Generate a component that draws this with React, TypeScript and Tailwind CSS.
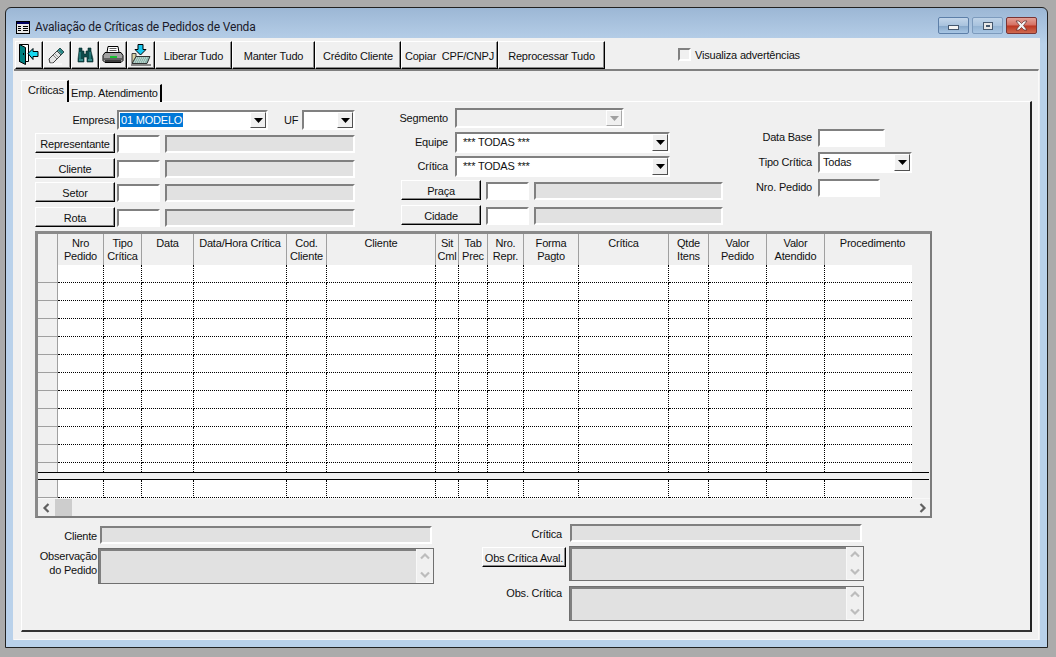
import React from "react";

const raised =
  "flex items-center justify-center border border-t-white border-l-white border-r-black border-b-black shadow-[inset_-1px_-1px_0_#8a8a8a] bg-[#f0f0f0] text-[#111]";
const sunken = "border-2 border-t-[#808080] border-l-[#808080] border-r-white border-b-white";

function Btn({ className, children }: { className: string; children: React.ReactNode }) {
  return <div className={`${raised} pt-[2px] ${className}`}>{children}</div>;
}

function IconBtn({ children }: { children: React.ReactNode }) {
  return <div className={`${raised} w-[28px] h-[28px]`}>{children}</div>;
}

function Input({ className }: { className: string }) {
  return <div className={`${sunken} bg-white mt-[2px] h-[18px] ${className}`} />;
}

function ReadOnly({ className }: { className: string }) {
  return <div className={`${sunken} bg-[#e1e1e1] h-[18px] ${className}`} />;
}

function Arrow({ disabled }: { disabled?: boolean }) {
  return (
    <svg width="9" height="5" viewBox="0 0 9 5">
      <path d="M0 0h9L4.5 5z" fill={disabled ? "#a0a0a0" : "#000"} />
    </svg>
  );
}

function Combo({
  className,
  text,
  selected,
  disabled,
  inset,
}: {
  className: string;
  text?: string;
  selected?: boolean;
  disabled?: boolean;
  inset?: boolean;
}) {
  return (
    <div className={`${sunken} flex items-stretch ${disabled ? "bg-[#f0f0f0]" : "bg-white"} ${className}`}>
      <div className={`flex-1 flex items-center min-w-0 ${inset ? "pl-[4px]" : "pl-[1px]"}`}>
        {text &&
          (selected ? (
            <span className="bg-[#0078d7] text-white px-[1px] leading-[14px]">{text}</span>
          ) : (
            <span className="px-[2px] text-[#111]">{text}</span>
          ))}
      </div>
      <div
        className={`w-[16px] flex items-center justify-center bg-[#f0f0f0] border border-t-white border-l-white ${
          disabled ? "border-r-[#a8a8a8] border-b-[#a8a8a8]" : "border-r-[#505050] border-b-[#505050]"
        }`}
      >
        <Arrow disabled={disabled} />
      </div>
    </div>
  );
}

function Chevron({ dir, color, size = 10 }: { dir: "l" | "r" | "u" | "d"; color: string; size?: number }) {
  const d = {
    l: "M6.5 1 2.5 5l4 4",
    r: "M3.5 1l4 4-4 4",
    u: "M1 6.5l4-4 4 4",
    d: "M1 3.5l4 4 4-4",
  }[dir];
  return (
    <svg width={size} height={size} viewBox="0 0 10 10">
      <path d={d} fill="none" stroke={color} strokeWidth="2.2" />
    </svg>
  );
}

function Memo({ className }: { className: string }) {
  return (
    <div className={`border border-[#6f6f6f] bg-[#e1e1e1] flex ${className}`}>
      <div className="flex-1 border-t-2 border-l-2 border-[#808080]" />
      <div className="w-[17px] border-l border-b border-[#f8f8f8] bg-[#f0f0f0] flex flex-col items-center justify-between py-[3px]">
        <Chevron dir="u" color="#bcbcbc" />
        <Chevron dir="d" color="#bcbcbc" />
      </div>
    </div>
  );
}

const gridCols =
  "grid grid-cols-[20px_46px_38px_52px_93px_40px_109px_23px_29px_36px_55px_90px_40px_58px_58px_87px]";

const headers: React.ReactNode[] = [
  "",
  <>Nro<br />Pedido</>,
  <>Tipo<br />Crítica</>,
  "Data",
  "Data/Hora Crítica",
  <>Cod.<br />Cliente</>,
  "Cliente",
  <>Sit<br />Cml</>,
  <>Tab<br />Prec</>,
  <>Nro.<br />Repr.</>,
  <>Forma<br />Pagto</>,
  "Crítica",
  <>Qtde<br />Itens</>,
  <>Valor<br />Pedido</>,
  <>Valor<br />Atendido</>,
  "Procedimento",
];

function DataRow({ h, line = true }: { h: string; line?: boolean }) {
  return (
    <div className={`${gridCols} ${h}`}>
      {headers.map((_, i) =>
        i === 0 ? (
          <div key={i} className={`bg-[#f0f0f0] border-r border-[#a0a0a0] ${line ? "border-b" : ""}`} />
        ) : (
          <div
            key={i}
            className={`bg-white ${i < 15 ? "border-r border-dotted border-r-black" : ""} ${
              line ? "border-b border-dotted border-b-black" : ""
            }`}
          />
        )
      )}
    </div>
  );
}

function Door() {
  return (
    <svg width="22" height="22" viewBox="0 0 22 22">
      <path d="M1.500 .5h9v17h-9z" fill="#fff" stroke="#000" />
      <path d="M1.500 .5l6 3v17l-6-3z" fill="#008080" stroke="#000" />
      <rect x="5" y="9" width="1" height="2" fill="#000" />
      <path d="M10 9.500l5-5v3h5v5h-5v3z" fill="#19d8f0" stroke="#000" />
    </svg>
  );
}

function Eraser() {
  return (
    <svg width="22" height="22" viewBox="0 0 22 22">
      <path d="M3 15 14 4l4 4L7 19H4z" fill="#e4e4e4" stroke="#404040" />
      <path d="M11 7l3-3 4 4-3 3z" fill="#2a8a8a" stroke="#305050" />
      <path d="M7 11l4 4" stroke="#808080" />
      <path d="M9 10l3 3M12 7l3 3" stroke="#9a9a9a" />
      <path d="M2 20h14" stroke="#ffffff" />
    </svg>
  );
}

function Binoculars() {
  return (
    <svg width="20" height="18" viewBox="0 0 20 18">
      <path d="M4 2h3v3h2v3h2V5h2V2h3v3l2 8v3h-6v-5H9v5H3v-3L4 5z" fill="#0d4a4a" stroke="#062b2b" strokeWidth=".6" />
      <path d="M5 6v7M15 6v7" stroke="#3aa0a0" />
      <path d="M4 14h4M13 14h4" stroke="#6cc" />
    </svg>
  );
}

function Printer() {
  return (
    <svg width="22" height="20" viewBox="0 0 22 20">
      <path d="M6 1.500h10l1 6H5z" fill="#fff" stroke="#000" />
      <path d="M7.500 3.500h7M7.500 5.500h7" stroke="#606060" />
      <path d="M3 7.500h16l2 3v5l-2 2H3l-2-2v-5z" fill="#a0a0a0" stroke="#000" />
      <path d="M2 14h18" stroke="#202020" />
      <path d="M8 11h7v2H8z" fill="#18c030" />
      <path d="M3 15h16v2H3z" fill="#3c3c3c" />
    </svg>
  );
}

function Folder() {
  return (
    <svg width="22" height="22" viewBox="0 0 22 22">
      <path d="M8 .5h5v5h3l-5.500 5.500L5 5.500h3z" fill="#19c8f0" stroke="#000" />
      <path d="M2 9.500h4v10H2z" fill="#d8d0a0" stroke="#404040" />
      <path d="M6 12.500h14l-3 7H2z" fill="#8fb8b0" stroke="#303030" />
      <path d="M6 14h11M5 16h11M4 18h11" stroke="#e0e8e0" strokeDasharray="1 1" />
      <path d="M1 21h20" stroke="#202020" />
    </svg>
  );
}

function CaptionButtons() {
  return (
    <div className="flex gap-[3px] mr-[3px] mt-[9px]">
      <div className="w-[31px] h-[17px] rounded-[2px] border border-[#5d7fa8] bg-[linear-gradient(to_bottom,#c3d6ea_0%,#a9c3de_50%,#86a7c9_52%,#a8c6e4_100%)] flex items-center justify-center">
        <div className="w-[11px] h-[5px] mt-[3px] bg-[#f4f4f4] border border-[#45586f]" />
      </div>
      <div className="w-[31px] h-[17px] rounded-[2px] border border-[#7d9bbd] bg-[linear-gradient(to_bottom,#bfd3e8_0%,#a9c3de_50%,#93b2d2_52%,#a8c6e4_100%)] flex items-center justify-center">
        <div className="w-[10px] h-[8px] bg-[#e8e8e8] border border-[#45586f] flex items-center justify-center">
          <div className="w-[4px] h-[2px] bg-[#45586f]" />
        </div>
      </div>
      <div className="w-[31px] h-[17px] rounded-[2px] border border-[#7a3434] bg-[linear-gradient(to_bottom,#e3a197_0%,#d56f62_48%,#bb3420_52%,#cf6a50_100%)] flex items-center justify-center">
        <svg width="13" height="11" viewBox="0 0 13 11">
          <path d="M1 1h3l2.500 2.500L9 1h3L8.500 5.500 12 10H9L6.500 7.500 4 10H1l3.500-4.500z" fill="#f2f2f2" stroke="#5a2a2a" strokeWidth=".7" />
        </svg>
      </div>
    </div>
  );
}

export default function App() {
  return (
    <div className="w-[1056px] h-[657px] bg-[#ababab] overflow-hidden pt-[7px] pl-[5px] text-[11px] tracking-[-0.2px] text-[#111] font-['Liberation_Sans',Arial,sans-serif]">
      <div className="w-[1043px] h-[641px] rounded-t-[6px] border border-[#222] px-[7px] bg-[linear-gradient(to_bottom,#9cb7d5_0px,#b9d1ea_36px)]">
        {/* title bar */}
        <div className="h-[30px] flex justify-between items-start">
          <div className="flex items-center mt-[11px] ml-[3px] gap-[5px]">
            <svg width="14" height="13" viewBox="0 0 14 13">
              <rect x=".5" y=".5" width="13" height="12" fill="#e8e8e8" stroke="#000" />
              <rect x="1" y="1" width="12" height="2" fill="#000060" />
              <path d="M2 5h3v1H2zM2 7h3v1H2zM2 9h3v1H2zM7 5h5v1H7zM7 7h5v1H7zM7 9h5v1H7z" fill="#000" />
            </svg>
            <span className="text-[12px] tracking-[-0.15px] leading-[16px] text-[#1a1a2a] font-['Roboto',sans-serif]">
              Avaliação de Críticas de Pedidos de Venda
            </span>
          </div>
          <CaptionButtons />
        </div>

        {/* client */}
        <div className="w-[1027px] h-[602px] bg-[#f0f0f0]">
          {/* toolbar */}
          <div className="h-[31px] pt-[3px] pl-[2px] flex">
            <IconBtn><Door /></IconBtn>
            <IconBtn><Eraser /></IconBtn>
            <IconBtn><Binoculars /></IconBtn>
            <IconBtn><Printer /></IconBtn>
            <IconBtn><Folder /></IconBtn>
            <Btn className="w-[77px] h-[28px]">Liberar Tudo</Btn>
            <Btn className="w-[83px] h-[28px]">Manter Tudo</Btn>
            <Btn className="w-[86px] h-[28px]">Crédito Cliente</Btn>
            <Btn className="w-[97px] h-[28px] whitespace-pre">Copiar  CPF/CNPJ</Btn>
            <Btn className="w-[107px] h-[28px]">Reprocessar Tudo</Btn>
            <div className="flex items-center ml-[73px] h-[28px]">
              <div className={`${sunken} w-[13px] h-[13px] mb-[2px] bg-[#f0f0f0]`} />
              <span className="ml-[4px]">Visualiza advertências</span>
            </div>
          </div>

          {/* panel */}
          <div className="ml-[1px] w-[1025px] h-[571px] border-t-2 border-t-[#808080] border-b border-r border-b-[#fafafa] border-r-[#fafafa] pl-[7px] pt-[9px]">
            {/* tabs */}
            <div className="flex items-end h-[22px] -mb-[1px] relative z-10">
              <div className="w-[48px] h-[22px] bg-[#f0f0f0] border-t border-l border-t-white border-l-white border-r-2 border-r-black pl-[6px] pt-[1px]">
                Críticas
              </div>
              <div className="w-[93px] h-[18px] border-t border-t-white border-r-2 border-r-black pl-[2px] whitespace-nowrap">
                Emp. Atendimento
              </div>
            </div>

            {/* page */}
            <div className="w-[1011px] h-[531px] border-t border-l border-t-white border-l-white border-r-2 border-r-[#222] border-b-2 border-b-[#333]">
              {/* form */}
              <div className="h-[129px] flex">
                {/* left */}
                <div className="ml-[13px] w-[320px] pt-[8px]">
                  <div className="flex items-center h-[20px]">
                    <span className="w-[80px] text-right">Empresa</span>
                    <Combo className="ml-[2px] w-[151px] h-[20px]" text="01 MODELO" selected />
                    <span className="ml-[16px] w-[15px]">UF</span>
                    <Combo className="ml-[3px] w-[53px] h-[20px]" />
                  </div>
                  <div className="flex mt-[3px] h-[20px]">
                    <Btn className="w-[80px] h-[20px]">Representante</Btn>
                    <Input className="ml-[2px] w-[43px]" />
                    <ReadOnly className="ml-[5px] w-[190px] mt-[2px]" />
                  </div>
                  <div className="flex mt-[5px] h-[20px]">
                    <Btn className="w-[80px] h-[20px]">Cliente</Btn>
                    <Input className="ml-[2px] w-[43px]" />
                    <ReadOnly className="ml-[5px] w-[190px] mt-[2px]" />
                  </div>
                  <div className="flex mt-[4px] h-[20px]">
                    <Btn className="w-[80px] h-[20px]">Setor</Btn>
                    <Input className="ml-[2px] w-[43px]" />
                    <ReadOnly className="ml-[5px] w-[190px] mt-[2px]" />
                  </div>
                  <div className="flex mt-[5px] h-[20px]">
                    <Btn className="w-[80px] h-[20px]">Rota</Btn>
                    <Input className="ml-[2px] w-[43px]" />
                    <ReadOnly className="ml-[5px] w-[190px] mt-[2px]" />
                  </div>
                </div>

                {/* middle */}
                <div className="ml-[44px] w-[324px] pt-[6px]">
                  <div className="flex items-center h-[20px]">
                    <span className="w-[49px] text-right">Segmento</span>
                    <Combo className="ml-[7px] w-[169px] h-[20px]" disabled />
                  </div>
                  <div className="flex items-center h-[21px] mt-[4px]">
                    <span className="w-[49px] text-right">Equipe</span>
                    <Combo className="ml-[7px] w-[215px] h-[21px]" text="*** TODAS ***" inset />
                  </div>
                  <div className="flex items-center h-[21px] mt-[3px]">
                    <span className="w-[49px] text-right">Crítica</span>
                    <Combo className="ml-[7px] w-[215px] h-[21px]" text="*** TODAS ***" inset />
                  </div>
                  <div className="flex mt-[3px] h-[20px] ml-[2px]">
                    <Btn className="w-[80px] h-[20px]">Praça</Btn>
                    <Input className="ml-[5px] w-[43px]" />
                    <ReadOnly className="ml-[5px] w-[189px] mt-[2px]" />
                  </div>
                  <div className="flex mt-[5px] h-[20px] ml-[2px]">
                    <Btn className="w-[80px] h-[20px]">Cidade</Btn>
                    <Input className="ml-[5px] w-[43px]" />
                    <ReadOnly className="ml-[5px] w-[189px] mt-[2px]" />
                  </div>
                </div>

                {/* right */}
                <div className="ml-[27px] pt-[27px]">
                  <div className="flex items-center h-[18px]">
                    <span className="w-[62px] text-right pb-[2px]">Data Base</span>
                    <div className={`${sunken} ml-[6px] w-[67px] h-[18px] bg-white`} />
                  </div>
                  <div className="flex items-center h-[21px] mt-[5px]">
                    <span className="w-[62px] text-right">Tipo Crítica</span>
                    <Combo className="ml-[6px] w-[94px] h-[21px]" text="Todas" />
                  </div>
                  <div className="flex items-center h-[18px] mt-[6px]">
                    <span className="w-[62px] text-right pb-[2px]">Nro. Pedido</span>
                    <div className={`${sunken} ml-[6px] w-[62px] h-[18px] bg-white`} />
                  </div>
                </div>
              </div>

              {/* grid */}
              <div className="ml-[13px] w-[897px] h-[287px] border-t-[3px] border-l-[3px] border-r-2 border-b-2 border-t-[#8a8a8a] border-l-[#8a8a8a] border-r-[#7c7c7c] border-b-[#7c7c7c] bg-[#f0f0f0]">
                <div className={`${gridCols} h-[31px]`}>
                  {headers.map((h, i) => (
                    <div
                      key={i}
                      className={`text-center leading-[13px] pt-[3px] overflow-hidden whitespace-nowrap ${
                        i < 15 ? "border-r border-[#a0a0a0]" : "pl-[8px]"
                      }`}
                    >
                      {h}
                    </div>
                  ))}
                </div>
                {Array.from({ length: 11 }).map((_, i) => (
                  <DataRow key={i} h="h-[18px]" />
                ))}
                <DataRow h="h-[9px]" line={false} />
                <div className="h-[8px] w-[891px] border-y border-black" />
                <DataRow h="h-[18px]" />
                <div className="h-[18px] flex items-center justify-between pr-[3px] border-t border-[#f8f8f8]">
                  <div className="flex items-stretch h-[17px]">
                    <div className="w-[17px] flex items-center justify-center">
                      <Chevron dir="l" color="#606060" />
                    </div>
                    <div className="w-[17px] bg-[#cdcdcd]" />
                  </div>
                  <Chevron dir="r" color="#606060" />
                </div>
              </div>

              {/* bottom */}
              <div className="flex">
                <div className="ml-[13px] w-[399px] pt-[8px]">
                  <div className="flex items-center h-[18px]">
                    <span className="w-[62px] text-right pt-[2px]">Cliente</span>
                    <ReadOnly className="ml-[3px] w-[332px]" />
                  </div>
                  <div className="flex mt-[4px]">
                    <span className="w-[62px] text-right leading-[14px] pt-[1px]">
                      Observação
                      <br />
                      do Pedido
                    </span>
                    <Memo className="ml-[1px] w-[336px] h-[36px]" />
                  </div>
                </div>
                <div className="ml-[48px] pt-[6px]">
                  <div className="flex items-center h-[18px]">
                    <span className="w-[80px] text-right pt-[2px]">Crítica</span>
                    <ReadOnly className="ml-[8px] w-[292px]" />
                  </div>
                  <div className="flex mt-[4px]">
                    <Btn className="w-[84px] h-[20px] mt-[1px] whitespace-nowrap">Obs Crítica Aval.</Btn>
                    <Memo className="ml-[3px] w-[295px] h-[35px]" />
                  </div>
                  <div className="flex mt-[5px]">
                    <span className="w-[80px] text-right leading-[14px]">Obs. Crítica</span>
                    <Memo className="ml-[7px] w-[295px] h-[35px]" />
                  </div>
                </div>
              </div>
            </div>
          </div>
        </div>
      </div>
    </div>
  );
}
